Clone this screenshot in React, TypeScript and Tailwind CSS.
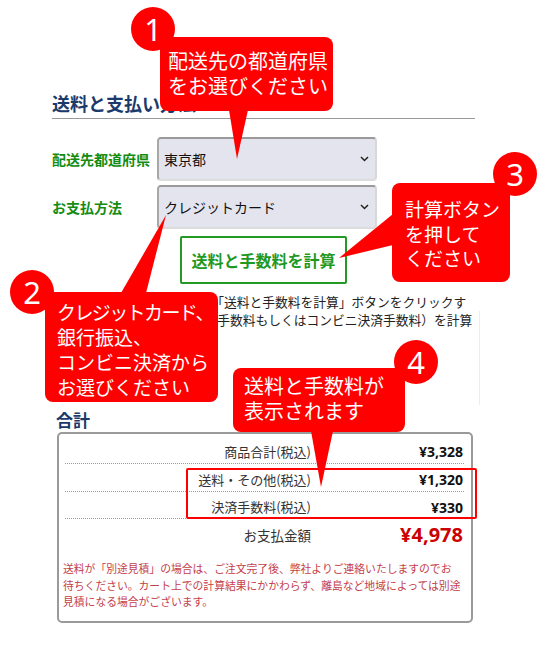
import React from "react";

const Chevron = () => (
  <svg width="9" height="6" viewBox="0 0 9 6" className="mr-[6px]">
    <polyline points="1,1 4.5,4.5 8,1" fill="none" stroke="#222" strokeWidth="1.5" />
  </svg>
);

function Select({ value }: { value: string }) {
  return (
    <div className="flex h-[44px] w-[220px] items-center justify-between rounded-[4px] border-2 border-t-[#9a9a9a] border-l-[#a8a8a8] border-r-[#d8d8d8] border-b-[#dcdcdc] bg-[#e4e4ee] pl-[5px]">
      <span className="text-[14px] text-[#111]">{value}</span>
      <Chevron />
    </div>
  );
}

const rows = [
  { label: "商品合計(税込)", value: "¥3,328", h: "h-[28px]" },
  { label: "送料・その他(税込)", value: "¥1,320", h: "h-[28px]" },
  { label: "決済手数料(税込)", value: "¥330", h: "h-[27px]" },
];

function Badge({ n, className }: { n: string; className: string }) {
  return (
    <div
      className={`absolute flex h-[44px] w-[44px] items-center justify-center rounded-full bg-[#ff0000] font-['Noto_Sans',sans-serif] text-[31px] leading-none text-white ${className}`}
    >
      {n}
    </div>
  );
}

export default function App() {
  return (
    <div className="relative h-[647px] w-[550px] overflow-hidden bg-white font-['Noto_Sans_CJK_JP','Noto_Sans',sans-serif] text-[#222]">
      <div className="ml-[52px] w-[428px] pt-[92px]">
        <h2 className="h-[27px] w-[423px] border-b border-[#9a9a9a] text-[18px] font-bold leading-[22px] text-[#1b3a6b]">
          送料と支払い方法
        </h2>

        <div className="mt-[18px] flex items-center">
          <span className="w-[105px] text-[14px] font-bold text-[#128c12]">配送先都道府県</span>
          <Select value="東京都" />
        </div>
        <div className="mt-[4px] flex items-center">
          <span className="w-[105px] text-[14px] font-bold text-[#128c12]">お支払方法</span>
          <Select value="クレジットカード" />
        </div>

        <button className="ml-[128px] mt-[7px] flex h-[48px] w-[167px] items-center justify-center rounded-[2px] border-2 border-[#239a23] bg-white text-[16px] font-bold text-[#1f991f]">
          送料と手数料を計算
        </button>

        <p className="mt-[9px] whitespace-nowrap text-[12.75px] leading-[18px] text-[#222]">
          お支払い方法を選択のうえ、「送料と手数料を計算」ボタンをクリックす
        </p>
        <div className="h-[94px] w-[428px] border-r border-[#ececec]">
          <p className="whitespace-nowrap text-[12.75px] leading-[18px] text-[#222]">
            ると、送料と手数料（代引き手数料もしくはコンビニ決済手数料）を計算
          </p>
        </div>

        <h3 className="ml-[4px] mt-[4px] text-[17px] font-bold leading-[22px] text-[#1b3a6b]">合計</h3>

        <div className="ml-[5px] mt-[1px] h-[191px] w-[416px] rounded-[5px] border-2 border-[#9a9a9a] pl-[6px] pr-[7px] pt-[2px]">
          {rows.map((r) => (
            <div
              key={r.label}
              className={`grid grid-cols-[1fr_145px] items-center border-b border-dotted border-[#9a9a9a] pt-[4px] ${r.h}`}
            >
              <span className="pr-[8px] text-right text-[13px] text-[#333]">{r.label}</span>
              <span className="pr-[1px] text-right font-['Noto_Sans',sans-serif] text-[14px] font-bold text-[#111]">
                {r.value}
              </span>
            </div>
          ))}
          <div className="grid h-[32px] grid-cols-[1fr_145px] items-center">
            <span className="pr-[8px] text-right text-[13.5px] text-[#333]">お支払金額</span>
            <span className="pr-[1px] text-right font-['Noto_Sans',sans-serif] text-[20px] font-bold text-[#cc0000]">
              ¥4,978
            </span>
          </div>
          <p className="-ml-[2px] mt-[9px] whitespace-nowrap text-[10.8px] leading-[16.5px] text-[#c4404a]">
            送料が「別途見積」の場合は、ご注文完了後、弊社よりご連絡いたしますのでお
            <br />
            待ちください。カート上での計算結果にかかわらず、離島など地域によっては別途
            <br />
            見積になる場合がございます。
          </p>
        </div>
      </div>

      {/* highlight on fee rows */}
      <div className="absolute left-[186px] top-[468px] h-[51px] w-[291px] rounded-[2px] border-2 border-[#ff0000]" />

      {/* callout tails */}
      <svg className="pointer-events-none absolute left-0 top-0" width="550" height="647">
        <polygon points="229,110 248,110 237,159" fill="#ff0000" />
        <polygon points="121,293 146,293 166,215" fill="#ff0000" />
        <polygon points="393,214 393,245 339,258" fill="#ff0000" />
        <polygon points="311,431 333,431 321,487" fill="#ff0000" />
      </svg>

      {/* callout boxes */}
      <div className="absolute left-[160px] top-[37px] h-[74px] w-[173px] rounded-[8px] bg-[#ff0000] pl-[8px] pt-[11px] text-[20px] leading-[25px] text-white">
        配送先の都道府県
        <br />
        をお選びください
      </div>
      <div className="absolute left-[45px] top-[292px] h-[110px] w-[173px] whitespace-nowrap rounded-[8px] bg-[#ff0000] pl-[12px] pt-[7px] text-[19px] leading-[25px] text-white">
        <span className="tracking-[-1.6px]">クレジットカード、</span>
        <br />
        銀行振込、
        <br />
        コンビニ決済から
        <br />
        お選びください
      </div>
      <div className="absolute left-[392px] top-[183px] h-[99px] w-[118px] rounded-[8px] bg-[#ff0000] pl-[13px] pt-[14px] text-[19px] leading-[24.5px] text-white">
        計算ボタン
        <br />
        を押して
        <br />
        ください
      </div>
      <div className="absolute left-[233px] top-[368px] h-[64px] w-[172px] rounded-[8px] bg-[#ff0000] pl-[11px] pt-[5px] text-[20px] leading-[25px] text-white">
        送料と手数料が
        <br />
        表示されます
      </div>

      <Badge n="1" className="left-[131px] top-[7px]" />
      <Badge n="2" className="left-[10px] top-[270px]" />
      <Badge n="3" className="left-[493px] top-[152px]" />
      <Badge n="4" className="left-[394px] top-[340px]" />
    </div>
  );
}
